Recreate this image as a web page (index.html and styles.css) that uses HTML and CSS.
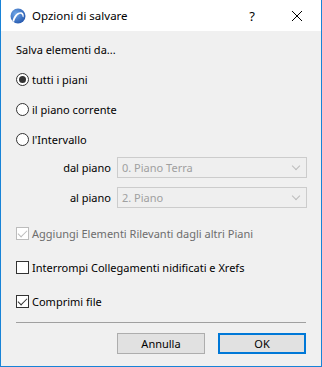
FILE: index.html
```html
<!DOCTYPE html>
<html lang="it">
<head>
    <meta charset="UTF-8">
    <title>Opzioni di salvare</title>
    <link rel="stylesheet" href="styles.css">
</head>
<body>
    <div class="window">
        <div class="titlebar">
            <svg class="app-icon" width="16" height="16" viewBox="0 0 16 16">
                <defs>
                    <radialGradient id="g" cx="0.35" cy="0.35" r="0.8">
                        <stop offset="0" stop-color="#6fa6e6"/>
                        <stop offset="1" stop-color="#1d4fa8"/>
                    </radialGradient>
                </defs>
                <circle cx="8" cy="8" r="7.5" fill="url(#g)"/>
                <path d="M2.5 13 C4 7 8 3.5 12 4.5 C13.5 5 14 7 13.5 9.5 L12.5 8.5 C12.5 6.5 11 5.5 9.5 6 C7 7 5 10 4 14 Z" fill="#fff"/>
            </svg>
            <span class="title">Opzioni di salvare</span>
            <span class="help">?</span>
            <svg class="close" width="12" height="12" viewBox="0 0 12 12">
                <path d="M1 1 L11 11 M11 1 L1 11" stroke="#000" stroke-width="1" fill="none"/>
            </svg>
        </div>

        <div class="content">
            <div class="row heading">Salva elementi da...</div>

            <label class="row"><span class="radio checked"></span>tutti i piani</label>
            <label class="row"><span class="radio"></span>il piano corrente</label>
            <label class="row"><span class="radio"></span>l'Intervallo</label>

            <div class="range">
                <span class="range-label">dal piano</span>
                <div class="select"><span>0. Piano Terra</span><i class="chevron"></i></div>
                <span class="range-label">al piano</span>
                <div class="select"><span>2. Piano</span><i class="chevron"></i></div>
            </div>

            <div class="checks">
                <label class="row disabled"><span class="check checked"></span>Aggiungi Elementi Rilevanti dagli altri Piani</label>
                <label class="row"><span class="check"></span>Interrompi Collegamenti nidificati e Xrefs</label>
                <label class="row"><span class="check checked"></span>Comprimi file</label>
            </div>

            <hr class="divider">

            <div class="buttons">
                <button class="btn">Annulla</button>
                <button class="btn default">OK</button>
            </div>
        </div>
    </div>
</body>
</html>
```

FILE: styles.css
```css
* {
    box-sizing: border-box;
}

body {
    margin: 0;
    font-family: 'Noto Sans', 'Open Sans', sans-serif;
    font-size: 11px;
    color: #000;
}

.window {
    width: 322px;
    height: 367px;
    border: 1px solid #1883d7;
    border-top: none;
    background-color: #f0f0f0;
    display: flex;
    flex-direction: column;
}

.titlebar {
    height: 31px;
    background-color: #fff;
    display: flex;
    align-items: center;
    padding-left: 9px;
    flex-shrink: 0;
}

.app-icon {
    margin-right: 6px;
}

.title {
    font-size: 11.5px;
    flex: 1;
}

.help {
    font-size: 13px;
    margin-right: 36px;
}

.close {
    margin-right: 18px;
}

.content {
    padding: 3px 15px 0 15px;
    display: flex;
    flex-direction: column;
}

.row {
    height: 30px;
    display: flex;
    align-items: center;
}

.radio {
    width: 13px;
    height: 13px;
    border: 1px solid #333;
    border-radius: 50%;
    background-color: #fff;
    margin-right: 3px;
    display: flex;
    align-items: center;
    justify-content: center;
}

.radio.checked::after {
    content: '';
    width: 7px;
    height: 7px;
    border-radius: 50%;
    background-color: #333;
}

.range {
    display: grid;
    grid-template-columns: 95px 190px;
    column-gap: 6px;
    row-gap: 9px;
    align-items: center;
    padding-top: 3px;
}

.range-label {
    text-align: right;
}

.select {
    height: 21px;
    border: 1px solid #ccc;
    background-color: #efefef;
    display: flex;
    align-items: center;
    color: #a0a0a0;
    padding-left: 4px;
}

.select span {
    flex: 1;
}

.chevron {
    width: 6px;
    height: 6px;
    border-right: 1px solid #bcbcbc;
    border-bottom: 1px solid #bcbcbc;
    transform: rotate(45deg);
    margin: 0 7px 3px 0;
}

.checks {
    padding-top: 8px;
}

.checks .row {
    height: 34px;
}

.check {
    width: 13px;
    height: 13px;
    border: 1px solid #333;
    background-color: #fff;
    margin-right: 3px;
    position: relative;
}

.check.checked::after {
    content: '';
    position: absolute;
    left: 3px;
    top: 0;
    width: 4px;
    height: 8px;
    border-right: 1px solid #333;
    border-bottom: 1px solid #333;
    transform: rotate(45deg);
}

.disabled {
    color: #6d6d6d;
}

.disabled .check {
    border-color: #bcbcbc;
}

.disabled .check.checked::after {
    border-color: #bcbcbc;
}

.divider {
    width: 100%;
    margin: 4px 0 0 0;
    border: none;
    border-top: 1px solid #a0a0a0;
}

.buttons {
    display: flex;
    justify-content: flex-end;
    gap: 13px;
    padding-top: 10px;
}

.btn {
    width: 88px;
    height: 21px;
    background-color: #e1e1e1;
    border: 1px solid #adadad;
    font-family: inherit;
    font-size: 11px;
    padding: 0;
}

.btn.default {
    border: 2px solid #0078d7;
}
```
